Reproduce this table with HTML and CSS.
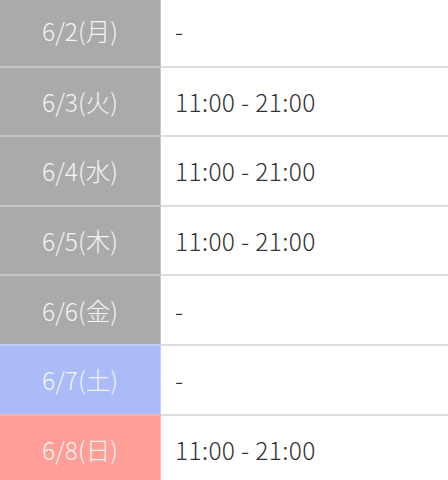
FILE: index.html
```html
<!DOCTYPE html>
<html lang="ja">
<head>
<meta charset="utf-8">
<link rel="stylesheet" href="styles.css">
</head>
<body>
<div class="schedule">
  <div class="row"><div class="date">6/2(月)</div><div class="time">-</div></div>
  <div class="row"><div class="date">6/3(火)</div><div class="time">11:00 - 21:00</div></div>
  <div class="row"><div class="date">6/4(水)</div><div class="time">11:00 - 21:00</div></div>
  <div class="row"><div class="date">6/5(木)</div><div class="time">11:00 - 21:00</div></div>
  <div class="row"><div class="date">6/6(金)</div><div class="time">-</div></div>
  <div class="row"><div class="date sat">6/7(土)</div><div class="time">-</div></div>
  <div class="row"><div class="date sun">6/8(日)</div><div class="time">11:00 - 21:00</div></div>
</div>
</body>
</html>
```
FILE: styles.css
```css
html, body {
  margin: 0;
  padding: 0;
  background: #fff;
  overflow: hidden;
}
body {
  font-family: "Noto Sans CJK JP", "Noto Sans", sans-serif;
  font-weight: 300;
}
.schedule {
  margin-top: -4px;
  display: flex;
  flex-direction: column;
}
.row {
  display: flex;
  height: 69.6px;
  box-sizing: border-box;
}
.row + .row .time {
  border-top: 2px solid #dddddd;
}
.row + .row .date {
  border-top: 2px solid #c4c4c4;
}
.row + .row .date.sat {
  border-top-color: #bcc8f6;
}
.row + .row .date.sun {
  border-top-color: #f7b0aa;
}
.date {
  width: 161px;
  flex: none;
  box-sizing: border-box;
  background: #aaaaaa;
  color: #f4f4f4;
  font-size: 24.5px;
  display: flex;
  align-items: center;
  justify-content: center;
  border-right: 1px solid #c8c8c8;
}
.date.sat {
  background: #aabbf8;
  border-right-color: #c4d0fa;
}
.date.sun {
  background: #ff9e97;
  border-right-color: #ffbcb6;
}
.time {
  flex: 1;
  box-sizing: border-box;
  display: flex;
  align-items: center;
  padding-left: 14px;
  color: #333333;
  font-size: 24.5px;
  letter-spacing: 0.35px;
}
```
